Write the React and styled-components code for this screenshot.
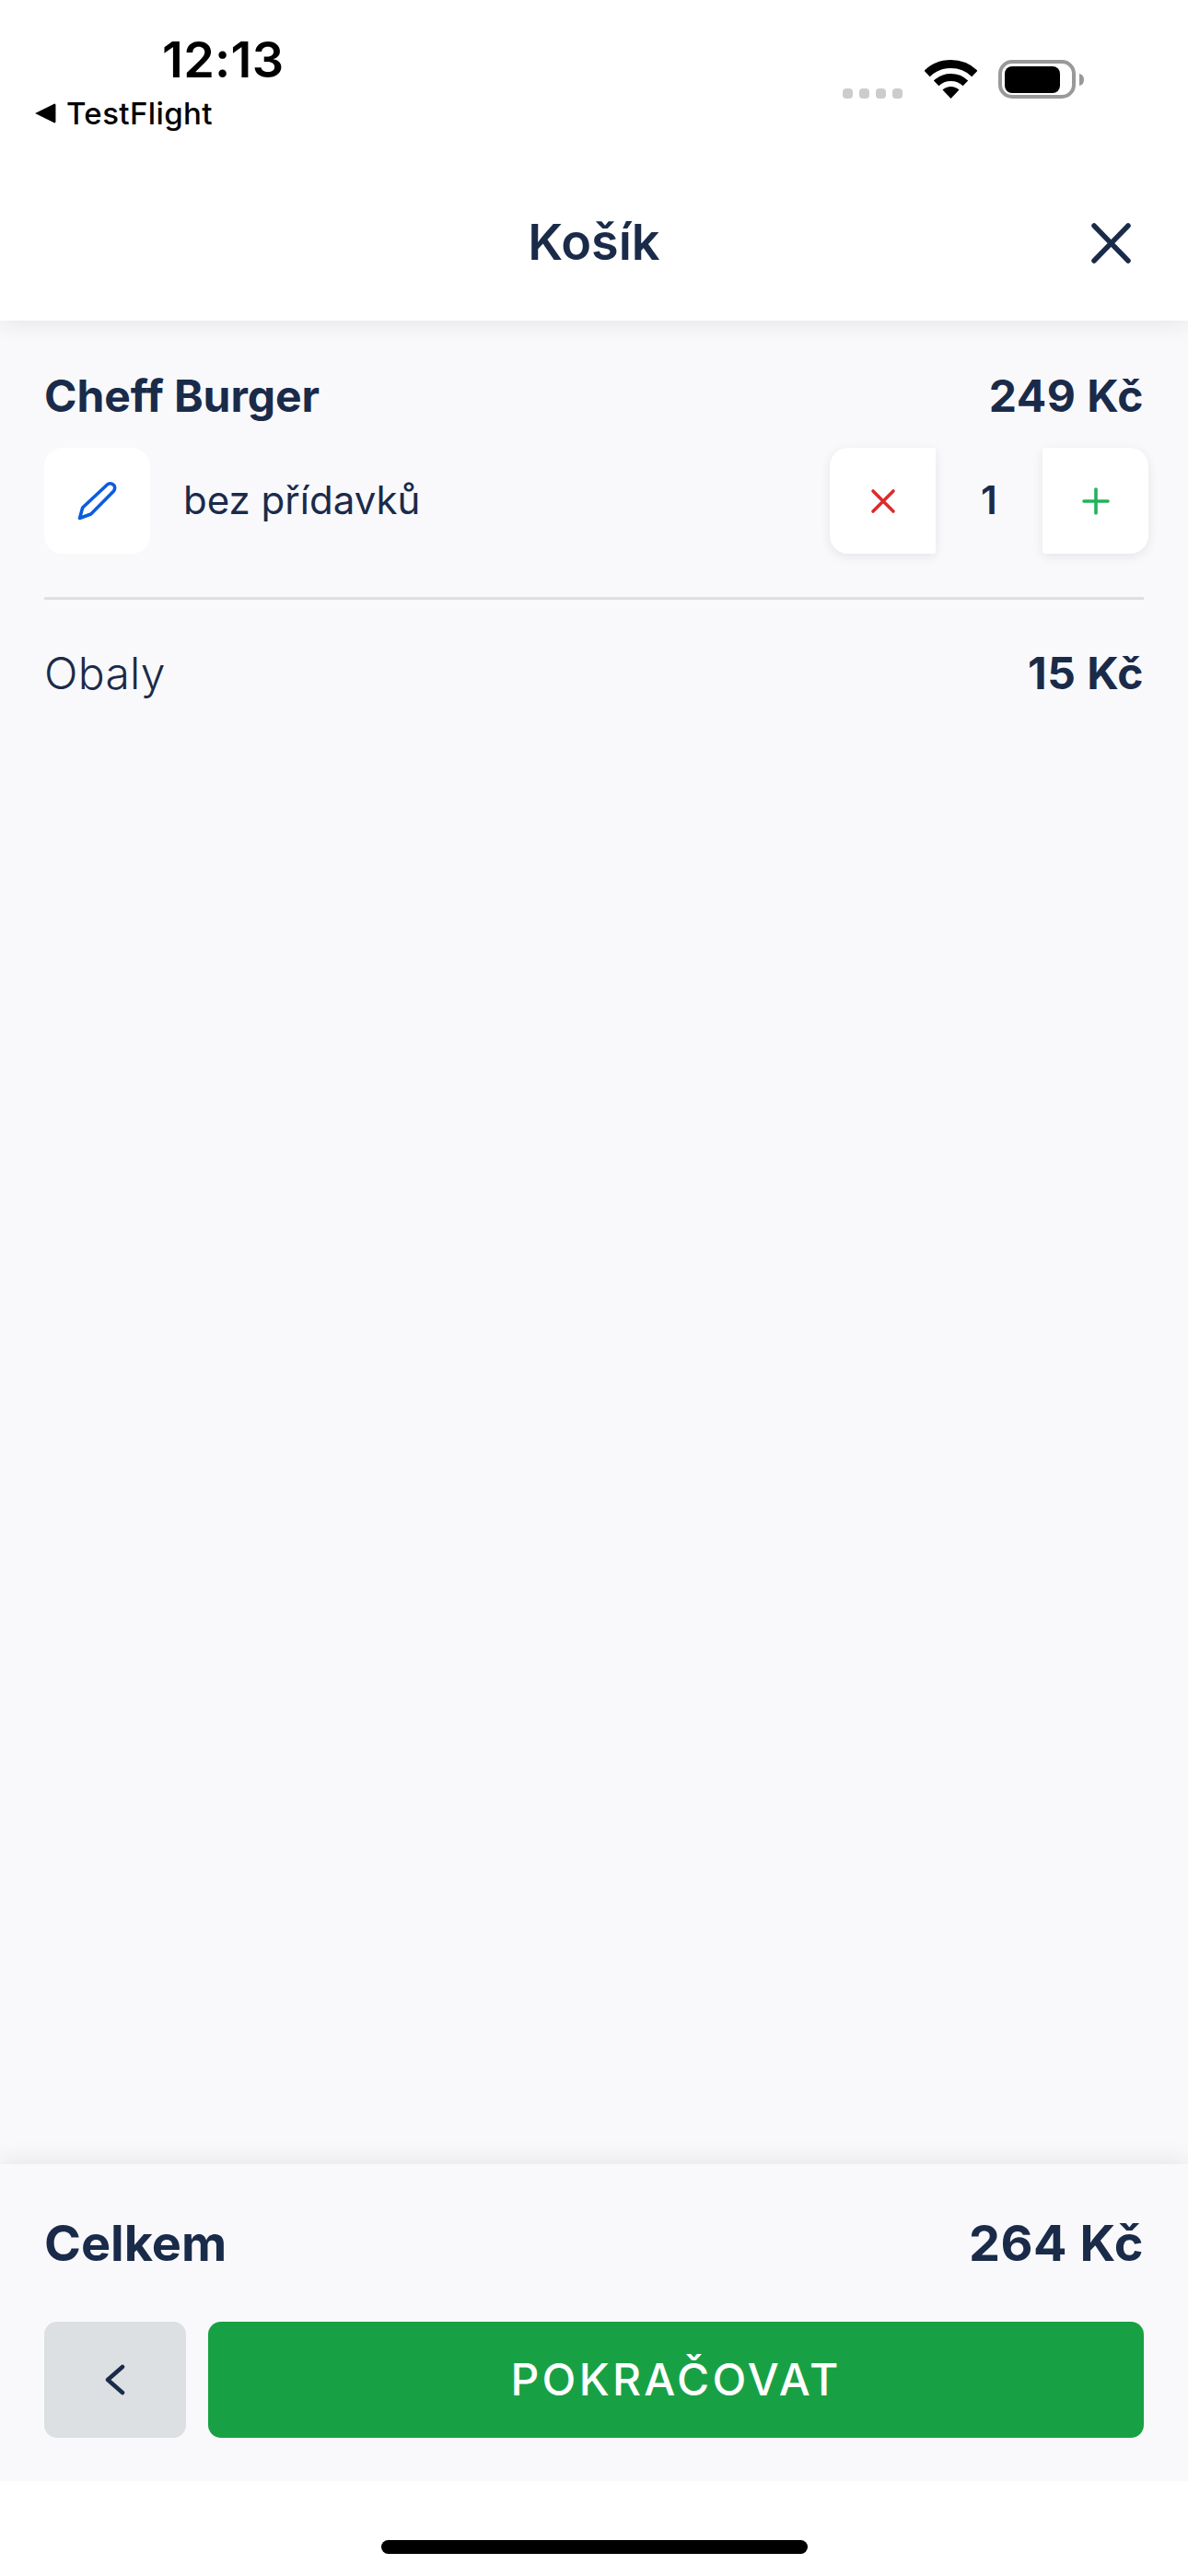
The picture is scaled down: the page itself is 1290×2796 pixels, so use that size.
import styled, { createGlobalStyle } from 'styled-components';

const GlobalStyle = createGlobalStyle`
  html, body {
    margin: 0;
    padding: 0;
    background: #fff;
  }
  * {
    box-sizing: border-box;
  }
`;

const navy = '#1a2b4a';

const Page = styled.div`
  width: 1290px;
  height: 2796px;
  display: flex;
  flex-direction: column;
  background: #f9f9fb;
  color: ${navy};
  font-family: Inter, "Noto Sans", sans-serif;
  overflow: hidden;
`;

const Header = styled.header`
  background: #fff;
  box-shadow: 0 2px 24px rgba(30, 35, 60, 0.1);
  position: relative;
  z-index: 1;
`;

const StatusBar = styled.div`
  height: 180px;
  display: flex;
  justify-content: space-between;
  color: #000;
`;

const StatusLeft = styled.div`
  width: 320px;
  padding: 33px 0 0 37px;
`;

const Clock = styled.div`
  font-size: 54px;
  line-height: 64px;
  font-weight: 600;
  margin-left: 139px;
  letter-spacing: 0.3px;
`;

const BackLink = styled.div`
  display: flex;
  align-items: center;
  gap: 11px;
  margin-top: 7px;
  font-size: 33px;
  line-height: 38px;
  font-weight: 500;
  letter-spacing: 0.4px;
`;

const BackArrow = styled.svg`
  width: 24px;
  height: 24px;
`;

const StatusRight = styled.div`
  display: flex;
  align-items: flex-end;
  height: 107px;
  padding-right: 113px;
`;

const SignalDots = styled.div`
  display: flex;
  gap: 7px;
  margin-right: 24px;
`;

const SignalDot = styled.span`
  width: 11px;
  height: 11px;
  border-radius: 4px;
  background: #cccccc;
`;

const Wifi = styled.svg`
  width: 57px;
  height: 42px;
  margin-right: 23px;
`;

const Battery = styled.svg`
  width: 93px;
  height: 42px;
`;

const TitleBar = styled.div`
  height: 168px;
  padding-bottom: 2px;
  display: flex;
  align-items: center;
  justify-content: center;
  position: relative;
`;

const Title = styled.h1`
  margin: 0;
  font-size: 54px;
  line-height: 64px;
  font-weight: 600;
`;

const CloseIcon = styled.svg`
  position: absolute;
  right: 62px;
  top: 62px;
  width: 44px;
  height: 44px;
`;

const Main = styled.main`
  flex: 1;
  padding: 52px 48px 0;
`;

const LineRow = styled.div`
  display: flex;
  justify-content: space-between;
  align-items: center;
  height: 60px;
  padding-bottom: 2px;
  font-size: 48px;
  font-weight: ${props => (props.$bold ? 700 : 400)};
`;

const ItemName = styled.span`
  letter-spacing: -0.1px;
`;

const Price = styled.span`
  font-weight: 700;
  letter-spacing: 0.01em;
`;

const LightLabel = styled.span`
  font-weight: 300;
  letter-spacing: 0.3px;
`;

const ItemRow = styled.div`
  display: flex;
  align-items: center;
  margin-top: 26px;
`;

const EditButton = styled.button`
  width: 115px;
  height: 115px;
  padding: 0;
  border: none;
  border-radius: 20px;
  background: #fff;
  display: flex;
  align-items: center;
  justify-content: center;
`;

const Note = styled.span`
  flex: 1;
  margin: 0 0 2px 36px;
  font-size: 42px;
  font-weight: 400;
`;

const QtyGroup = styled.div`
  display: flex;
  align-items: center;
  margin-right: -5px;
`;

const QtyButton = styled.button`
  width: 115px;
  height: 115px;
  padding: 0;
  border: none;
  background: #fff;
  border-radius: ${props => (props.$side === 'left' ? '20px 3px 3px 20px' : '3px 20px 20px 3px')};
  box-shadow: 0 3px 12px rgba(30, 35, 60, 0.09);
  display: flex;
  align-items: center;
  justify-content: center;
`;

const QtyValue = styled.span`
  width: 116px;
  margin-bottom: 2px;
  text-align: center;
  font-size: 42px;
  font-weight: 600;
`;

const Divider = styled.hr`
  height: 3px;
  margin: 47px 0 50px;
  border: none;
  background: #dfdfe3;
`;

const Footer = styled.footer`
  height: 344px;
  padding: 54px 48px 0;
  background: #f9f9fb;
  box-shadow: 0 -2px 24px rgba(30, 35, 60, 0.1);
  position: relative;
`;

const TotalRow = styled.div`
  display: flex;
  justify-content: space-between;
  align-items: center;
  height: 64px;
  padding-bottom: 2px;
  font-size: 54px;
  font-weight: 700;
`;

const Actions = styled.div`
  display: flex;
  gap: 24px;
  margin-top: 53px;
`;

const BackButton = styled.button`
  width: 154px;
  height: 126px;
  padding: 0;
  border: none;
  border-radius: 14px;
  background: #dce0e3;
  display: flex;
  align-items: center;
  justify-content: center;
`;

const ContinueButton = styled.button`
  flex: 1;
  height: 126px;
  padding: 0 0 2px;
  border: none;
  border-radius: 14px;
  background: #18a144;
  color: #fff;
  font-family: inherit;
  font-size: 48px;
  font-weight: 500;
  letter-spacing: 3.3px;
`;

const SafeArea = styled.div`
  height: 103px;
  background: #fff;
  position: relative;
  z-index: 1;
  display: flex;
  justify-content: center;
  padding-top: 64px;
`;

const HomeBar = styled.div`
  width: 463px;
  height: 15px;
  border-radius: 8px;
  background: #000;
`;

const Stroke = ({ children, size, box = 24, color, width, ...rest }) => (
  <svg
    width={size}
    height={size}
    viewBox={`0 0 ${box} ${box}`}
    fill="none"
    stroke={color}
    strokeWidth={width}
    strokeLinecap="round"
    strokeLinejoin="round"
    {...rest}
  >
    {children}
  </svg>
);

export default function App() {
  return (
    <Page>
      <GlobalStyle />
      <Header>
        <StatusBar>
          <StatusLeft>
            <Clock>12:13</Clock>
            <BackLink>
              <BackArrow viewBox="0 0 22 22">
                <path d="M1 11 L20 1.5 Q21.5 1 21.5 3 V19 Q21.5 21 20 20.5 Z" fill="#000" />
              </BackArrow>
              TestFlight
            </BackLink>
          </StatusLeft>
          <StatusRight>
            <SignalDots>
              <SignalDot />
              <SignalDot />
              <SignalDot />
              <SignalDot />
            </SignalDots>
            <Wifi viewBox="0 0 57 42">
              <path d="M2.6 14.9 A37.5 37.5 0 0 1 54.4 14.9" fill="none" stroke="#000" strokeWidth="9" />
              <path d="M12.6 25.4 A23 23 0 0 1 44.4 25.4" fill="none" stroke="#000" strokeWidth="8" />
              <path d="M28.5 42 L19.5 32.6 A13 13 0 0 1 37.5 32.6 Z" fill="#000" />
            </Wifi>
            <Battery viewBox="0 0 93 42">
              <rect x="2" y="2" width="80" height="38" rx="13" fill="none" stroke="#999" strokeWidth="4" />
              <rect x="7" y="7" width="60" height="29" rx="8" fill="#000" />
              <path d="M88 15 Q93 16 93 21.5 Q93 27 88 28 Z" fill="#999" />
            </Battery>
          </StatusRight>
        </StatusBar>
        <TitleBar>
          <Title>Košík</Title>
          <CloseIcon viewBox="0 0 44 44" fill="none" stroke={navy} strokeWidth="5.5" strokeLinecap="round">
            <path d="M4 3 L41 41 M41 3 L4 41" />
          </CloseIcon>
        </TitleBar>
      </Header>

      <Main>
        <LineRow $bold>
          <ItemName>Cheff Burger</ItemName>
          <Price>249 Kč</Price>
        </LineRow>
        <ItemRow>
          <EditButton>
            <Stroke size={43} box={43} color="#0b5ce0" width={3.6}>
              <path d="M2.5 40.5 L5.7 29 L33 3.5 Q37 1.5 40 5 Q41.5 8 39.5 11 L14.7 36 Z" />
            </Stroke>
          </EditButton>
          <Note>bez přídavků</Note>
          <QtyGroup>
            <QtyButton $side="left">
              <Stroke size={28} box={28} color="#dc2b2b" width={3.6}>
                <path d="M3 3 L25 25 M25 3 L3 25" />
              </Stroke>
            </QtyButton>
            <QtyValue>1</QtyValue>
            <QtyButton $side="right">
              <Stroke size={30} box={30} color="#22b25c" width={3.6}>
                <path d="M15 2 V28 M2 15 H28" />
              </Stroke>
            </QtyButton>
          </QtyGroup>
        </ItemRow>
        <Divider />
        <LineRow>
          <LightLabel>Obaly</LightLabel>
          <Price>15 Kč</Price>
        </LineRow>
      </Main>

      <Footer>
        <TotalRow>
          <span>Celkem</span>
          <Price>264 Kč</Price>
        </TotalRow>
        <Actions>
          <BackButton>
            <Stroke size={34} box={34} color={navy} width={4.5}>
              <path d="M25 3 L9 17 L25 31" />
            </Stroke>
          </BackButton>
          <ContinueButton>POKRAČOVAT</ContinueButton>
        </Actions>
      </Footer>

      <SafeArea>
        <HomeBar />
      </SafeArea>
    </Page>
  );
}
